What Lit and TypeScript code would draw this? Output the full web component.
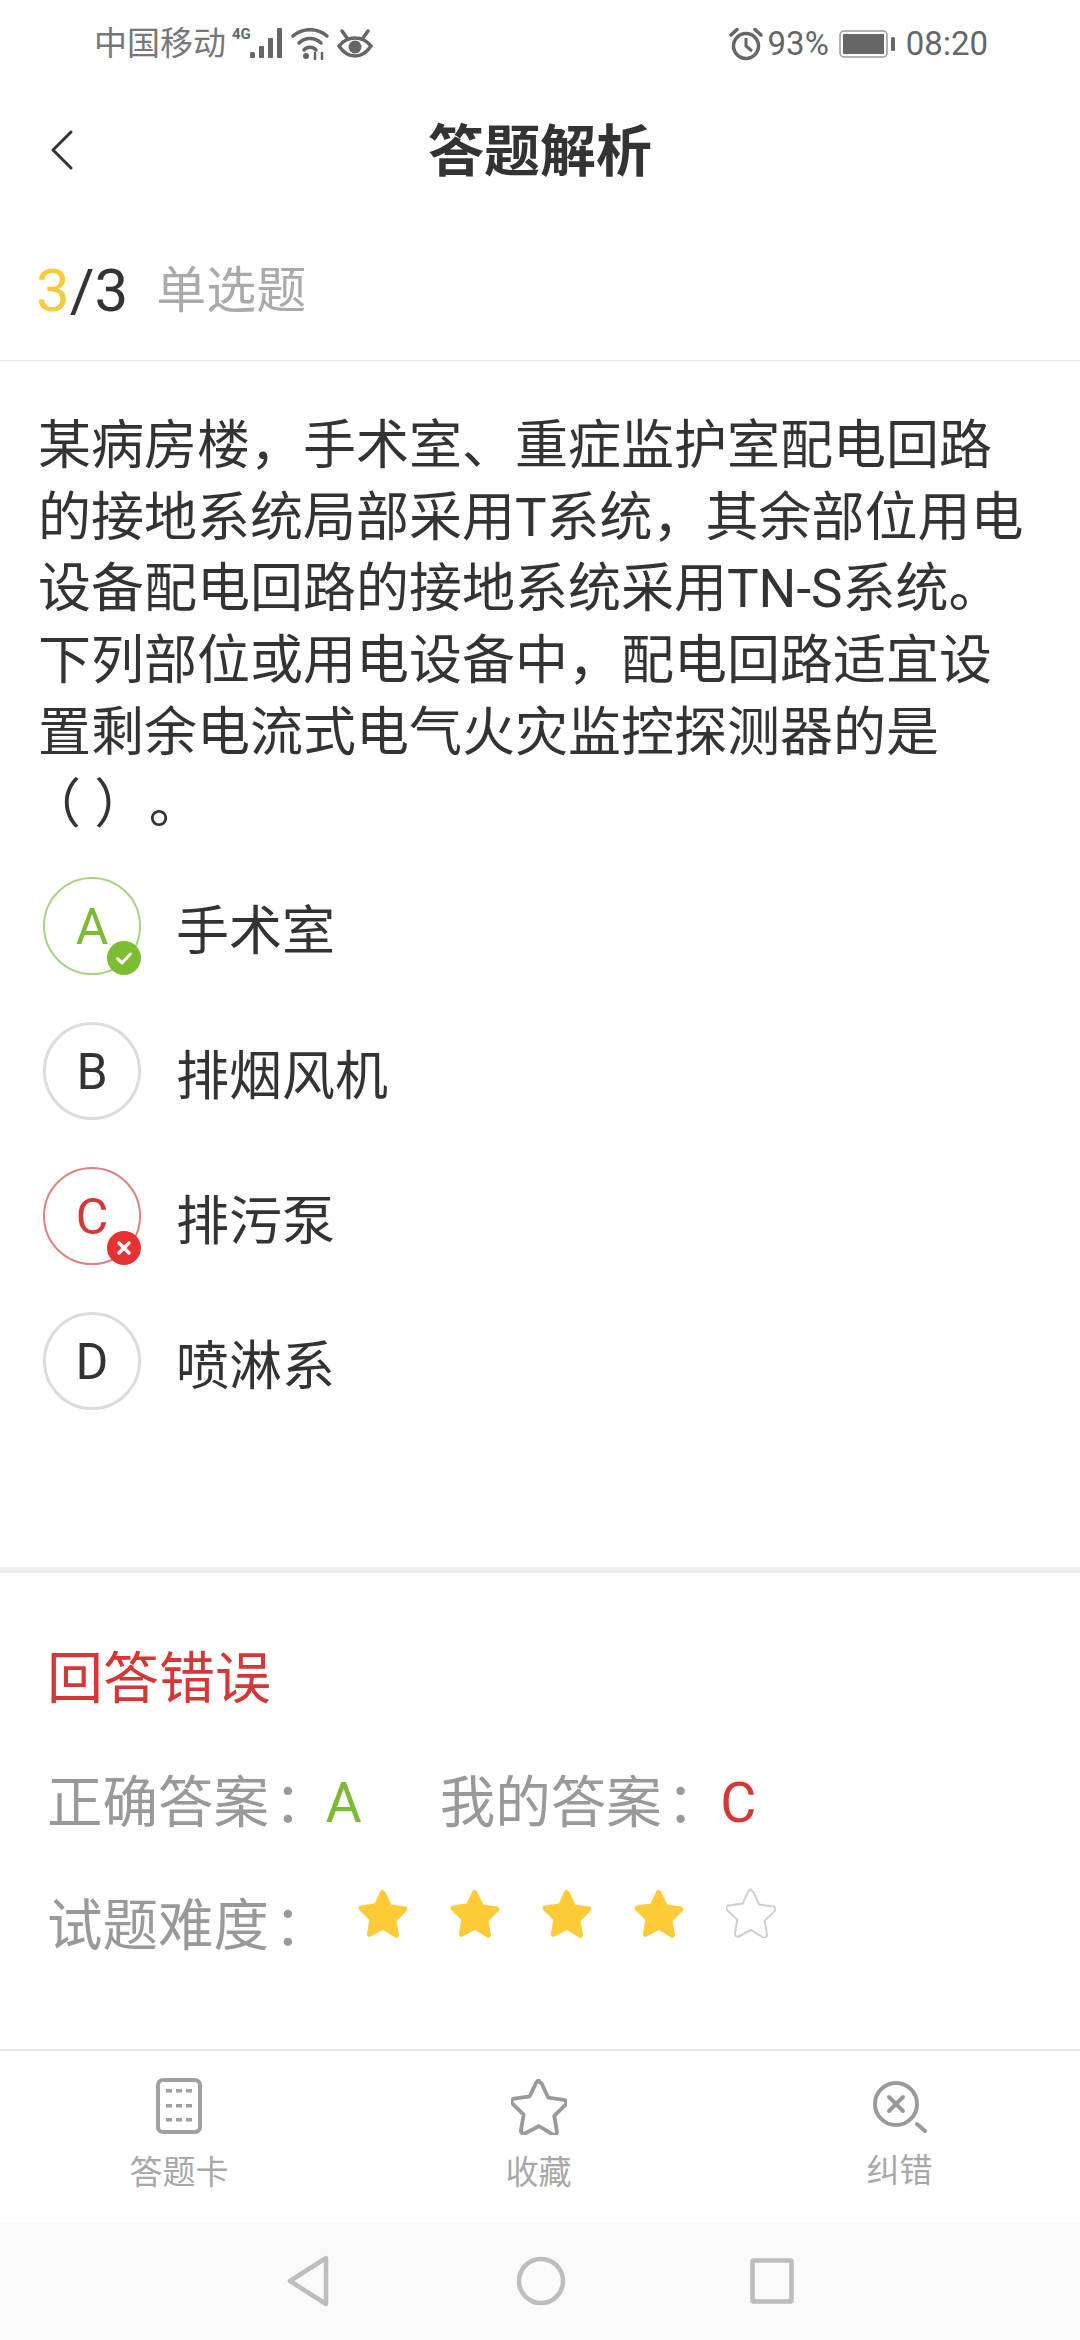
import { LitElement, html, css, svg } from "lit";
import { customElement } from "lit/decorators.js";

const STAR = "M25 2.5c1 0 1.8.6 2.3 1.5l6 12.6 13.8 2c2.2.3 3 3 1.5 4.500l-10 9.800 2.400 13.800c.4 2.200-1.900 3.800-3.800 2.800L25 42l-12.300 6.500c-1.900 1-4.200-.6-3.800-2.800l2.400-13.800-10-9.800c-1.500-1.500-.7-4.200 1.500-4.500l13.800-2 6-12.600c.5-.9 1.400-1.500 2.400-1.500z";

const options = [
  { k: "A", t: "手术室", s: "ok" },
  { k: "B", t: "排烟风机", s: "" },
  { k: "C", t: "排污泵", s: "bad" },
  { k: "D", t: "喷淋系", s: "" },
];

@customElement("app-root")
export class AppRoot extends LitElement {
  static styles = css`
    :host { display: block; width: 1080px; height: 2340px; background: #fff; overflow: hidden; font-family: "Roboto", "Noto Sans CJK SC", sans-serif; color: #333; }
    .page { display: flex; flex-direction: column; height: 2340px; }
    .status { height: 88px; display: flex; align-items: center; justify-content: space-between; padding: 0 92px 0 94px; color: #666; font-size: 33px; flex: none; }
    .status .grp { display: flex; align-items: center; }
    .status svg { display: block; flex: none; }
    .carrier { font-size: 33px; line-height: 40px; margin-right: 6px; color: #777; }
    .nums { font-size: 33px; line-height: 40px; }
    .head { height: 128px; flex: none; display: flex; align-items: center; justify-content: center; position: relative; }
    .head h1 { margin: 0; font-size: 56px; line-height: 72px; font-weight: 700; color: #333; }
    .back { position: absolute; left: 49px; top: 41px; }
    .count { height: 139px; flex: none; display: flex; align-items: center; padding: 5px 0 0 36px; border-bottom: 1px solid #e6e6e6; box-sizing: content-box; }
    .count .n { font-size: 60px; line-height: 70px; }
    .count .y { color: #f7c93c; }
    .count .type { font-size: 50px; color: #aaa; margin-left: 28px; line-height: 70px; }
    .q { margin: 0; padding: 50px 38px 0 38px; font-size: 53px; line-height: 71.7px; color: #333; height: 480px; flex: none; box-sizing: border-box; }
    .nb { white-space: nowrap; margin-left: -10px; }
    .dot { margin-left: 28px; }
    .opts { display: flex; flex-direction: column; gap: 47px; padding: 36px 0 0 43px; box-sizing: border-box; flex: none; border-bottom: 6px solid #eeeeee; height: 732px; }
    .opt { display: flex; align-items: center; height: 98px; }
    .c { position: relative; width: 98px; height: 98px; border-radius: 50%; border: 3px solid #dcdcdc; box-sizing: border-box; display: flex; align-items: center; justify-content: center; font-size: 50px; color: #333; flex: none; padding-top: 2px; }
    .c.ok { border: 2px solid #a9d282; color: #7cbb31; }
    .c.bad { border: 2px solid #e08080; color: #d53636; }
    .badge { position: absolute; right: -2px; bottom: -2px; width: 34px; height: 34px; border-radius: 50%; display: flex; align-items: center; justify-content: center; }
    .badge.ok { background: #7cbd32; }
    .badge.bad { background: #e63232; }
    .opt .t { margin-left: 35px; font-size: 53px; color: #333; line-height: 70px; padding-top: 11px; }
    .res { flex: 1; padding: 71px 0 0 47px; position: relative; }
    .res .title { font-size: 56px; line-height: 70px; color: #d53636; }
    .row { display: flex; align-items: center; font-size: 55.5px; line-height: 70px; color: #999; margin-top: 53px; }
    .res .title + .row { margin-top: 55px; }
    .colon { position: relative; left: 5px; }
    .row .a { color: #7cbb31; margin-left: 1px; }
    .row .e { color: #d53636; margin-left: 3px; }
    .row .sp { margin-left: 78px; display: flex; }
    .stars { display: flex; gap: 42px; margin-left: 33px; margin-top: -28px; }
    .stars svg { display: block; }
    .tabs { height: 173px; flex: none; border-top: 2px solid #e6e6e6; display: grid; grid-template-columns: 358px 361px 361px; box-sizing: border-box; }
    .tab { display: flex; flex-direction: column; align-items: center; padding-top: 26px; color: #a8a8a8; font-size: 33px; }
    .tab span { line-height: 44px; margin-top: 16px; }
    .tab svg { display: block; }
    .tab.s { padding-top: 28px; }
    .nav { height: 118px; flex: none; background: #fafafa; display: flex; align-items: center; justify-content: center; }
    .nav svg { display: block; }
    .nav .m1 { margin-right: 186px; }
    .nav .m2 { margin-right: 184px; }
  `;

  render() {
    return html`<div class="page">
      <div class="status">
        <div class="grp">
          <span class="carrier">中国移动</span>
          <svg width="50" height="36" viewBox="0 0 50 36" fill="#666">
            <text x="0" y="13" font-size="15" font-weight="700" font-family="Roboto">4G</text>
            <rect x="18" y="26" width="5" height="6" rx="1.500"/><rect x="27" y="20" width="5" height="12" rx="1"/><rect x="36" y="12" width="5" height="20" rx="1"/><rect x="45" y="2" width="5" height="30" rx="1"/>
          </svg>
          <svg style="margin-left:9px" width="38" height="32" viewBox="0 0 38 32" fill="none" stroke="#666" stroke-width="3.500" stroke-linecap="round">
            <path d="M2 8a26 26 0 0 1 34 0"/><path d="M8 15a16 16 0 0 1 22 0"/><path d="M13 22a8 8 0 0 1 12 0"/>
            <circle cx="15" cy="28" r="3" fill="#666" stroke="none"/>
            <path d="M24 25v6M31 25v6" stroke-width="2.500"/>
          </svg>
          <svg style="margin-left:8px" width="36" height="30" viewBox="0 0 36 30" fill="none" stroke="#666" stroke-width="3.500">
            <path d="M2 17c4-5 9-8 16-8s12 3 16 8c-4 6-9 10-16 10S6 23 2 17z"/>
            <circle cx="18" cy="18" r="6.500" fill="#666" stroke="none"/>
            <path d="M5 2l5 7M31 2l-5 7" stroke-linecap="round"/>
          </svg>
        </div>
        <div class="grp">
          <svg width="34" height="34" viewBox="0 0 34 34" fill="none" stroke="#666" stroke-width="3.500">
            <circle cx="17" cy="19" r="12.500"/><path d="M17 11v8l6 5" stroke-width="3"/>
            <path d="M2 8l6-5.500M32 8l-6-5.500" stroke-linecap="round"/>
          </svg>
          <span class="nums" style="margin-left:5px">93%</span>
          <svg style="margin-left:10px" width="58" height="30" viewBox="0 0 58 30" fill="none">
            <rect x="1" y="2" width="47" height="26" rx="4" stroke="#999" stroke-width="1.500"/>
            <rect x="4" y="5" width="41" height="20" fill="#666"/>
            <rect x="52" y="8" width="4" height="14" rx="1.500" fill="#666"/>
          </svg>
          <span class="nums" style="margin-left:9px">08:20</span>
        </div>
      </div>
      <div class="head">
        <svg class="back" width="26" height="42" viewBox="0 0 26 42" fill="none" stroke="#333" stroke-width="3" stroke-linecap="round" stroke-linejoin="round"><path d="M22 3L4 21l18 18"/></svg>
        <h1>答题解析</h1>
      </div>
      <div class="count"><span class="n"><span class="y">3</span>/3</span><span class="type">单选题</span></div>
      <p class="q">某病房楼，手术室、重症监护室配电回路的接地系统局部采用T系统，其余部位用电设备配电回路的接地系统采用TN-S系统。下列部位或用电设备中，配电回路适宜设置剩余电流式电气火灾监控探测器的是<span class="nb">（ ）<span class="dot">。</span></span></p>
      <div class="opts">
        ${options.map(o => html`<div class="opt">
          <div class="c ${o.s}">${o.k}
            ${o.s === "ok" ? html`<div class="badge ok"><svg width="20" height="20" viewBox="0 0 20 20" fill="none" stroke="#fff" stroke-width="3" stroke-linecap="round" stroke-linejoin="round"><path d="M3.500 10.500l4.500 4.500 8.500-9"/></svg></div>` : ""}
            ${o.s === "bad" ? html`<div class="badge bad"><svg width="16" height="16" viewBox="0 0 16 16" fill="none" stroke="#fff" stroke-width="3.500" stroke-linecap="round"><path d="M3 3l10 10M13 3L3 13"/></svg></div>` : ""}
          </div>
          <span class="t">${o.t}</span>
        </div>`)}
      </div>
      <div class="res">
        <div class="title">回答错误</div>
        <div class="row"><span>正确答案</span><span class="colon">：</span><span class="a">A</span><span class="sp"><span>我的答案</span><span class="colon">：</span></span><span class="e">C</span></div>
        <div class="row"><span>试题难度</span><span class="colon">：</span>
          <div class="stars">
            ${[0,1,2,3,4].map(i => html`<svg width="50" height="50" viewBox="0 0 50 50">${svg`<path d="${STAR}" fill="${i < 4 ? "#fdca38" : "#fff"}" stroke="${i < 4 ? "#fdca38" : "#cfcfcf"}" stroke-width="${i < 4 ? 0 : 2}"/>`}</svg>`)}
          </div>
        </div>
      </div>
      <div class="tabs">
        <div class="tab">
          <svg width="48" height="58" viewBox="0 0 48 58" fill="none" stroke="#a0a0a0" stroke-width="4"><rect x="3" y="3" width="42" height="52" rx="5"/>
            ${[14,29,43].map(y => [14,24,34].map(x => svg`<rect x="${x-3}" y="${y-2}" width="6" height="3.500" fill="#a0a0a0" stroke="none"/>`))}
          </svg>
          <span>答题卡</span>
        </div>
        <div class="tab s">
          <svg width="56" height="56" viewBox="0 0 50 50" fill="none"><path d="${STAR}" stroke="#9a9a9a" stroke-width="3.400" stroke-linejoin="round"/></svg>
          <span>收藏</span>
        </div>
        <div class="tab s">
          <svg width="58" height="56" viewBox="0 0 58 56" fill="none" stroke="#9a9a9a" stroke-width="4" stroke-linecap="round"><circle cx="25" cy="25" r="21"/><path d="M18 18l14 14M32 18L18 32"/><path d="M46 45l8 7" stroke-width="4"/></svg>
          <span style="margin-top:14px">纠错</span>
        </div>
      </div>
      <div class="nav">
        <svg class="m1" width="44" height="52" viewBox="0 0 44 52" fill="none" stroke="#bdbdbd" stroke-width="4.500" stroke-linejoin="round"><path d="M40 3L4 26l36 23z"/></svg>
        <svg class="m2" width="50" height="50" viewBox="0 0 50 50" fill="none" stroke="#bdbdbd" stroke-width="4.500"><circle cx="25" cy="25" r="22"/></svg>
        <svg width="44" height="46" viewBox="0 0 44 46" fill="none" stroke="#bdbdbd" stroke-width="4.500"><rect x="2.500" y="2.500" width="39" height="41" rx="1"/></svg>
      </div>
    </div>`;
  }
}
